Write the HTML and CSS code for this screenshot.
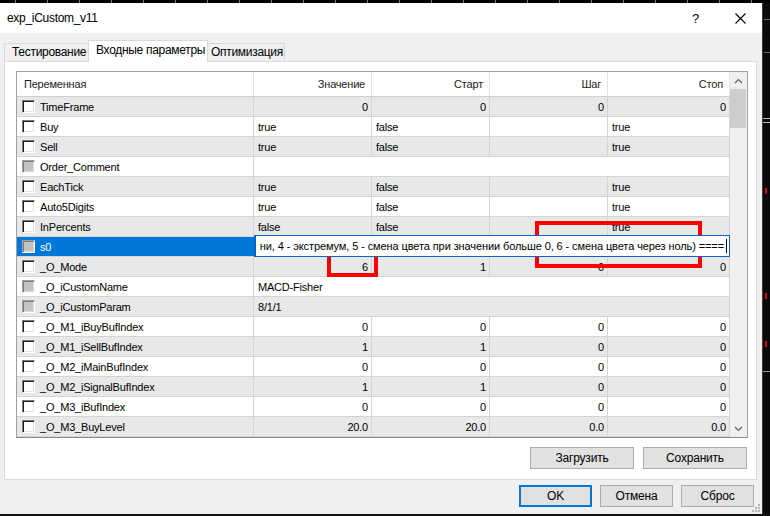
FILE: index.html
```html
<!DOCTYPE html>
<html lang="ru">
<head>
<meta charset="utf-8">
<title>exp_iCustom_v11</title>
<link rel="stylesheet" href="styles.css">
</head>
<body>
<div class="screen">
  <div class="ticks"></div>
  <div class="main">
    <div class="dialog">
      <div class="titlebar">
        <span class="title">exp_iCustom_v11</span>
        <span class="help">?</span>
        <span class="close"><svg width="11" height="11" viewBox="0 0 11 11"><path d="M0.5 0.5 L10.5 10.5 M10.5 0.5 L0.5 10.5" stroke="#000" stroke-width="1.1" fill="none"/></svg></span>
      </div>
      <div class="tabs">
        <div class="tab t1">Тестирование</div>
        <div class="tab t2 active">Входные параметры</div>
        <div class="tab t3">Оптимизация</div>
      </div>
      <div class="panel">
        <div class="list">
          <div class="table">
            <div class="row head">
              <div class="hcell left">Переменная</div>
              <div class="hcell">Значение</div>
              <div class="hcell">Старт</div>
              <div class="hcell">Шаг</div>
              <div class="hcell">Стоп</div>
            </div>
            <div class="row alt">
              <div class="cell name"><span class="cb"></span>TimeFrame</div>
              <div class="cell num">0</div><div class="cell num">0</div><div class="cell num">0</div><div class="cell num">0</div>
            </div>
            <div class="row">
              <div class="cell name"><span class="cb"></span>Buy</div>
              <div class="cell">true</div><div class="cell">false</div><div class="cell"></div><div class="cell">true</div>
            </div>
            <div class="row alt">
              <div class="cell name"><span class="cb"></span>Sell</div>
              <div class="cell">true</div><div class="cell">false</div><div class="cell"></div><div class="cell">true</div>
            </div>
            <div class="row">
              <div class="cell name"><span class="cb dis"></span>Order_Comment</div>
              <div class="cell span"></div>
            </div>
            <div class="row alt">
              <div class="cell name"><span class="cb"></span>EachTick</div>
              <div class="cell">true</div><div class="cell">false</div><div class="cell"></div><div class="cell">true</div>
            </div>
            <div class="row">
              <div class="cell name"><span class="cb"></span>Auto5Digits</div>
              <div class="cell">true</div><div class="cell">false</div><div class="cell"></div><div class="cell">true</div>
            </div>
            <div class="row alt">
              <div class="cell name"><span class="cb"></span>InPercents</div>
              <div class="cell">false</div><div class="cell">false</div><div class="cell"></div><div class="cell">true</div>
            </div>
            <div class="row sel">
              <div class="cell name"><span class="cb dis"></span>s0</div>
              <div class="cell span edit"><span class="edit-text">ни, 4 - экстремум, 5 - смена цвета при значении больше 0, 6 - смена цвета через ноль) ====</span><span class="caret"></span></div>
            </div>
            <div class="row alt">
              <div class="cell name"><span class="cb"></span>_O_Mode</div>
              <div class="cell num">6</div><div class="cell num">1</div><div class="cell num">0</div><div class="cell num">0</div>
            </div>
            <div class="row">
              <div class="cell name"><span class="cb dis"></span>_O_iCustomName</div>
              <div class="cell span">MACD-Fisher</div>
            </div>
            <div class="row alt">
              <div class="cell name"><span class="cb dis"></span>_O_iCustomParam</div>
              <div class="cell span">8/1/1</div>
            </div>
            <div class="row">
              <div class="cell name"><span class="cb"></span>_O_M1_iBuyBufIndex</div>
              <div class="cell num">0</div><div class="cell num">0</div><div class="cell num">0</div><div class="cell num">0</div>
            </div>
            <div class="row alt">
              <div class="cell name"><span class="cb"></span>_O_M1_iSellBufIndex</div>
              <div class="cell num">1</div><div class="cell num">1</div><div class="cell num">0</div><div class="cell num">0</div>
            </div>
            <div class="row">
              <div class="cell name"><span class="cb"></span>_O_M2_iMainBufIndex</div>
              <div class="cell num">0</div><div class="cell num">0</div><div class="cell num">0</div><div class="cell num">0</div>
            </div>
            <div class="row alt">
              <div class="cell name"><span class="cb"></span>_O_M2_iSignalBufIndex</div>
              <div class="cell num">1</div><div class="cell num">1</div><div class="cell num">0</div><div class="cell num">0</div>
            </div>
            <div class="row">
              <div class="cell name"><span class="cb"></span>_O_M3_iBufIndex</div>
              <div class="cell num">0</div><div class="cell num">0</div><div class="cell num">0</div><div class="cell num">0</div>
            </div>
            <div class="row alt">
              <div class="cell name"><span class="cb"></span>_O_M3_BuyLevel</div>
              <div class="cell num">20.0</div><div class="cell num">20.0</div><div class="cell num">0.0</div><div class="cell num">0.0</div>
            </div>
          </div>
          <div class="scrollbar">
            <div class="sb-btn"><svg width="9" height="6" viewBox="0 0 9 6"><path d="M1 5 L4.5 1.5 L8 5" stroke="#606060" stroke-width="1.2" fill="none"/></svg></div>
            <div class="sb-thumb"></div>
            <div class="sb-track"></div>
            <div class="sb-btn"><svg width="9" height="6" viewBox="0 0 9 6"><path d="M1 1 L4.5 4.5 L8 1" stroke="#606060" stroke-width="1.2" fill="none"/></svg></div>
          </div>
        </div>
        <div class="panel-buttons">
          <div class="btn wide">Загрузить</div>
          <div class="btn wide">Сохранить</div>
        </div>
      </div>
      <div class="dialog-buttons">
        <div class="btn ok">OK</div>
        <div class="btn">Отмена</div>
        <div class="btn">Сброс</div>
      </div>
      <svg class="grip" width="8" height="8" viewBox="0 0 8 8"><g fill="#b5b5b5"><rect x="6" y="0" width="2" height="2"/><rect x="3" y="3" width="2" height="2"/><rect x="6" y="3" width="2" height="2"/><rect x="0" y="6" width="2" height="2"/><rect x="3" y="6" width="2" height="2"/><rect x="6" y="6" width="2" height="2"/></g></svg>
    </div>
    <div class="chart-strip">
      <span class="cs cs1"></span>
      <span class="cs cs2"></span>
      <span class="cs cs3"></span>
      <span class="cs cs4"></span>
      <span class="cs red r1"></span>
      <span class="cs red r2"></span>
      <span class="cs red r3"></span>
      <span class="cs cs5"></span>
    </div>
  </div>
  <div class="mark mark1"></div>
  <div class="mark mark2"></div>
</div>
</body>
</html>
```

FILE: styles.css
```css
* { box-sizing: border-box; }
html, body { margin: 0; padding: 0; }
body {
  width: 770px;
  height: 516px;
  overflow: hidden;
  background: #111;
  font-family: "Liberation Sans", Arial, sans-serif;
  color: #000;
}
.screen {
  position: relative;
  width: 770px;
  height: 516px;
  display: flex;
  flex-direction: column;
}
.ticks {
  flex: none;
  height: 3px;
  background: #000 repeating-linear-gradient(to right, transparent 0 15px, #7a7a7a 15px 16px, transparent 16px 32px);
}
.main { flex: none; display: flex; height: 511px; }
.dialog {
  position: relative;
  flex: none;
  width: 763px;
  height: 511px;
  background: #f0f0f0;
  border-right: 1px solid #3a3a3a;
  display: flex;
  flex-direction: column;
}
.titlebar {
  flex: none;
  height: 30px;
  background: #fff;
  display: flex;
  align-items: center;
  padding-left: 7px;
  font-size: 12px;
  letter-spacing: -0.3px;
}
.title { flex: 1; }
.help { font-size: 13px; margin-right: 36px; }
.close { display: flex; margin-right: 16px; }
.tabs {
  flex: none;
  height: 28px;
  display: flex;
  align-items: flex-end;
  padding-left: 4px;
  font-size: 12px;
  letter-spacing: -0.3px;
}
.tab {
  height: 18px;
  border: 1px solid #d9d9d9;
  border-bottom: none;
  background: #f0f0f0;
  line-height: 17px;
  padding-left: 7px;
  white-space: nowrap;
}
.t1 { width: 85px; }
.t2 { width: 120px; margin-left: -1px; padding-left: 7px; }
.t3 { width: 78px; margin-left: -1px; padding-left: 3px; }
.tab.active {
  position: relative;
  z-index: 1;
  height: 22px;
  margin-bottom: -1px;
  background: #fff;
  line-height: 18px;
}
.panel {
  flex: none;
  margin-left: 4px;
  width: 753px;
  height: 419px;
  border: 1px solid #d9d9d9;
  background: #fff;
  padding: 9px 8px 0 11px;
}
.list {
  display: flex;
  width: 732px;
  height: 367px;
  border: 1px solid #a0a0a0;
  border-bottom-color: #8a8a8a;
  font-size: 11px;
  letter-spacing: -0.2px;
}
.table { width: 713px; flex: none; }
.row {
  display: grid;
  grid-template-columns: 237px 118px 118px 118px 122px;
  height: 20px;
  border-bottom: 1px solid #d4d4d4;
  background: #fff;
}
.row.alt { background: #e8e8e8; }
.row.head { height: 25px; border-bottom-color: #cfcfcf; }
.hcell {
  border-right: 1px solid #e3e3e3;
  display: flex;
  align-items: center;
  justify-content: flex-end;
  padding-right: 6px;
  color: #1a1a1a;
}
.hcell.left { justify-content: flex-start; padding-left: 7px; }
.cell {
  border-right: 1px solid #d4d4d4;
  display: flex;
  align-items: center;
  padding-left: 4px;
  white-space: nowrap;
  overflow: hidden;
}
.cell.num { justify-content: flex-end; padding-right: 3px; }
.cell.span { grid-column: 2 / 6; }
.cell.name { padding-left: 5px; }
.cb {
  flex: none;
  width: 13px;
  height: 13px;
  margin-right: 5px;
  background: #fff;
  border-top: 1px solid #7a7a7a;
  border-left: 1px solid #7a7a7a;
  border-right: 1px solid #fff;
  border-bottom: 1px solid #fff;
  box-shadow: inset 1px 1px 0 #1e1e1e, inset -1px -1px 0 #e3e3e3;
}
.cb.dis {
  background: #c4c4c4;
  border-top-color: #a0a0a0;
  border-left-color: #a0a0a0;
  box-shadow: inset 1px 1px 0 #7a7a7a, inset -1px -1px 0 #dcdcdc;
}
.row.sel .name { background: #0078d7; color: #fff; border-right-color: #0078d7; }
.cell.edit {
  position: relative;
  z-index: 1;
  margin: -2px 0 -1px 0;
  background: #fff;
  border: 1px solid #0a64c8;
  border-left-width: 2px;
  justify-content: flex-end;
  padding: 0 2px 0 0;
  letter-spacing: -0.1px;
}
.edit-text { flex: none; }
.caret { flex: none; width: 1px; height: 14px; background: #000; margin-left: 2px; }
.scrollbar {
  width: 17px;
  flex: none;
  background: #f0f0f0;
  display: flex;
  flex-direction: column;
}
.sb-btn { height: 17px; flex: none; display: flex; align-items: center; justify-content: center; }
.sb-thumb { height: 39px; flex: none; margin: 0 1px 0 0; background: #cdcdcd; }
.sb-track { flex: 1; }
.panel-buttons {
  display: flex;
  justify-content: flex-end;
  gap: 9px;
  margin-top: 9px;
  padding-right: 1px;
}
.btn {
  height: 22px;
  width: 73px;
  background: #e1e1e1;
  border: 1px solid #adadad;
  font-size: 12px;
  display: flex;
  align-items: center;
  justify-content: center;
  letter-spacing: -0.2px;
}
.btn.wide { width: 104px; }
.btn.ok { border: 2px solid #0078d7; }
.dialog-buttons {
  display: flex;
  justify-content: flex-end;
  gap: 8px;
  margin-top: 5px;
  padding-right: 8px;
}
.grip { position: absolute; right: 2px; bottom: 2px; }
.chart-strip { position: relative; flex: 1; background: #0b0b0b; }
.cs { position: absolute; left: 1px; height: 1px; width: 6px; background: #6a6a6a; }
.cs1 { top: 16px; }
.cs2 { top: 49px; }
.cs3 { top: 115px; left: 0; width: 7px; background: #bdbdbd; }
.cs4 { top: 119px; left: 0; width: 7px; background: #bdbdbd; }
.cs5 { top: 368px; left: 0; width: 7px; background: #9a9a9a; }
.red { background: #d01010; width: 2px; height: 6px; }
.r1 { top: 185px; left: 2px; }
.r2 { top: 290px; left: 2px; }
.r3 { top: 338px; left: 2px; }
.mark {
  position: absolute;
  border: 4px solid #ff0000;
}
.mark1 { left: 327px; top: 248px; width: 51px; height: 29px; }
.mark2 { left: 535px; top: 221px; width: 167px; height: 47px; }
```
